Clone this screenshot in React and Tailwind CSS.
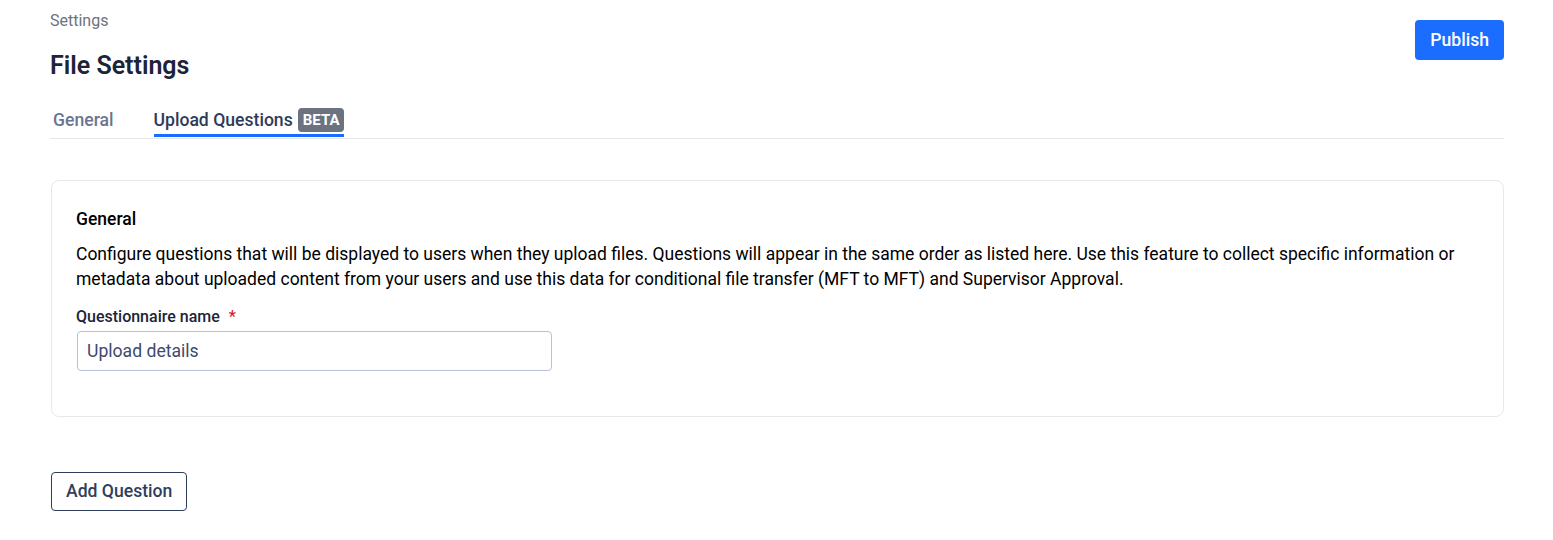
import React, { useState } from "react";

const tabs = [
  { name: "General" },
  { name: "Upload Questions", badge: "BETA" },
];

export default function App() {
  const [active, setActive] = useState("Upload Questions");
  const [name, setName] = useState("Upload details");

  return (
    <div className="min-h-screen bg-white px-[50px] pr-[49px] font-['Roboto',sans-serif]">
      {/* Header */}
      <div className="flex items-start justify-between">
        <div>
          <div className="pt-[9px] text-[16px] leading-6 text-[#6b7280]">Settings</div>
          <h1 className="mt-[17px] text-[25px] font-semibold leading-8 text-[#1c2438]">File Settings</h1>
        </div>
        <button className="mt-5 h-[40px] rounded-[4px] bg-[#1a6dff] px-[15px] pt-px text-[17.6px] font-medium text-white">
          Publish
        </button>
      </div>

      {/* Tabs */}
      <div className="mt-[26px] flex gap-10 border-b border-[#e5e7eb] pb-px pl-[3px]">
        {tabs.map((tab) => (
          <button
            key={tab.name}
            onClick={() => setActive(tab.name)}
            className={
              active === tab.name
                ? "flex items-center gap-[5px] border-b-[3px] border-[#1a6dff] pb-[2px] text-[17.6px] font-medium leading-6 text-[#2f3a58]"
                : "flex items-center gap-[5px] border-b-[3px] border-transparent pb-[2px] text-[17.6px] font-medium leading-6 text-[#6b7592]"
            }
          >
            {tab.name}
            {tab.badge && (
              <span className="rounded-[4px] bg-[#6b7280] px-[5px] text-[15px] font-bold leading-6 text-white">
                {tab.badge}
              </span>
            )}
          </button>
        ))}
      </div>

      {/* Card */}
      <div className="mt-[41px] ml-px rounded-lg border border-[#e8e8ea] px-6 pt-[26px] pb-[45px]">
        <h2 className="text-[17.5px] font-medium leading-6 text-black">General</h2>
        <p className="mt-[11px] text-[17.5px] leading-[25px] text-black">
          Configure questions that will be displayed to users when they upload files. Questions will appear in the same order as listed here. Use this feature to collect specific information or metadata about uploaded content from your users and use this data for conditional file transfer (MFT to MFT) and Supervisor Approval.
        </p>
        <label className="mt-[15px] block text-[16px] font-medium leading-5 text-[#1c2438]">
          Questionnaire name <span className="ml-[5px] text-[#d91c1c]">*</span>
        </label>
        <input
          value={name}
          onChange={(e) => setName(e.target.value)}
          className="mt-1 ml-px block h-[40px] w-[475px] rounded-[4px] border border-[#b8c1d9] px-[9px] text-[17.6px] text-[#3d4a6b] outline-none"
        />
      </div>

      <button className="mt-[55px] ml-px h-[39px] rounded-[4px] border border-[#2f3e5c] px-[14px] text-[17.6px] font-medium text-[#2f3e5c]">
        Add Question
      </button>
    </div>
  );
}
